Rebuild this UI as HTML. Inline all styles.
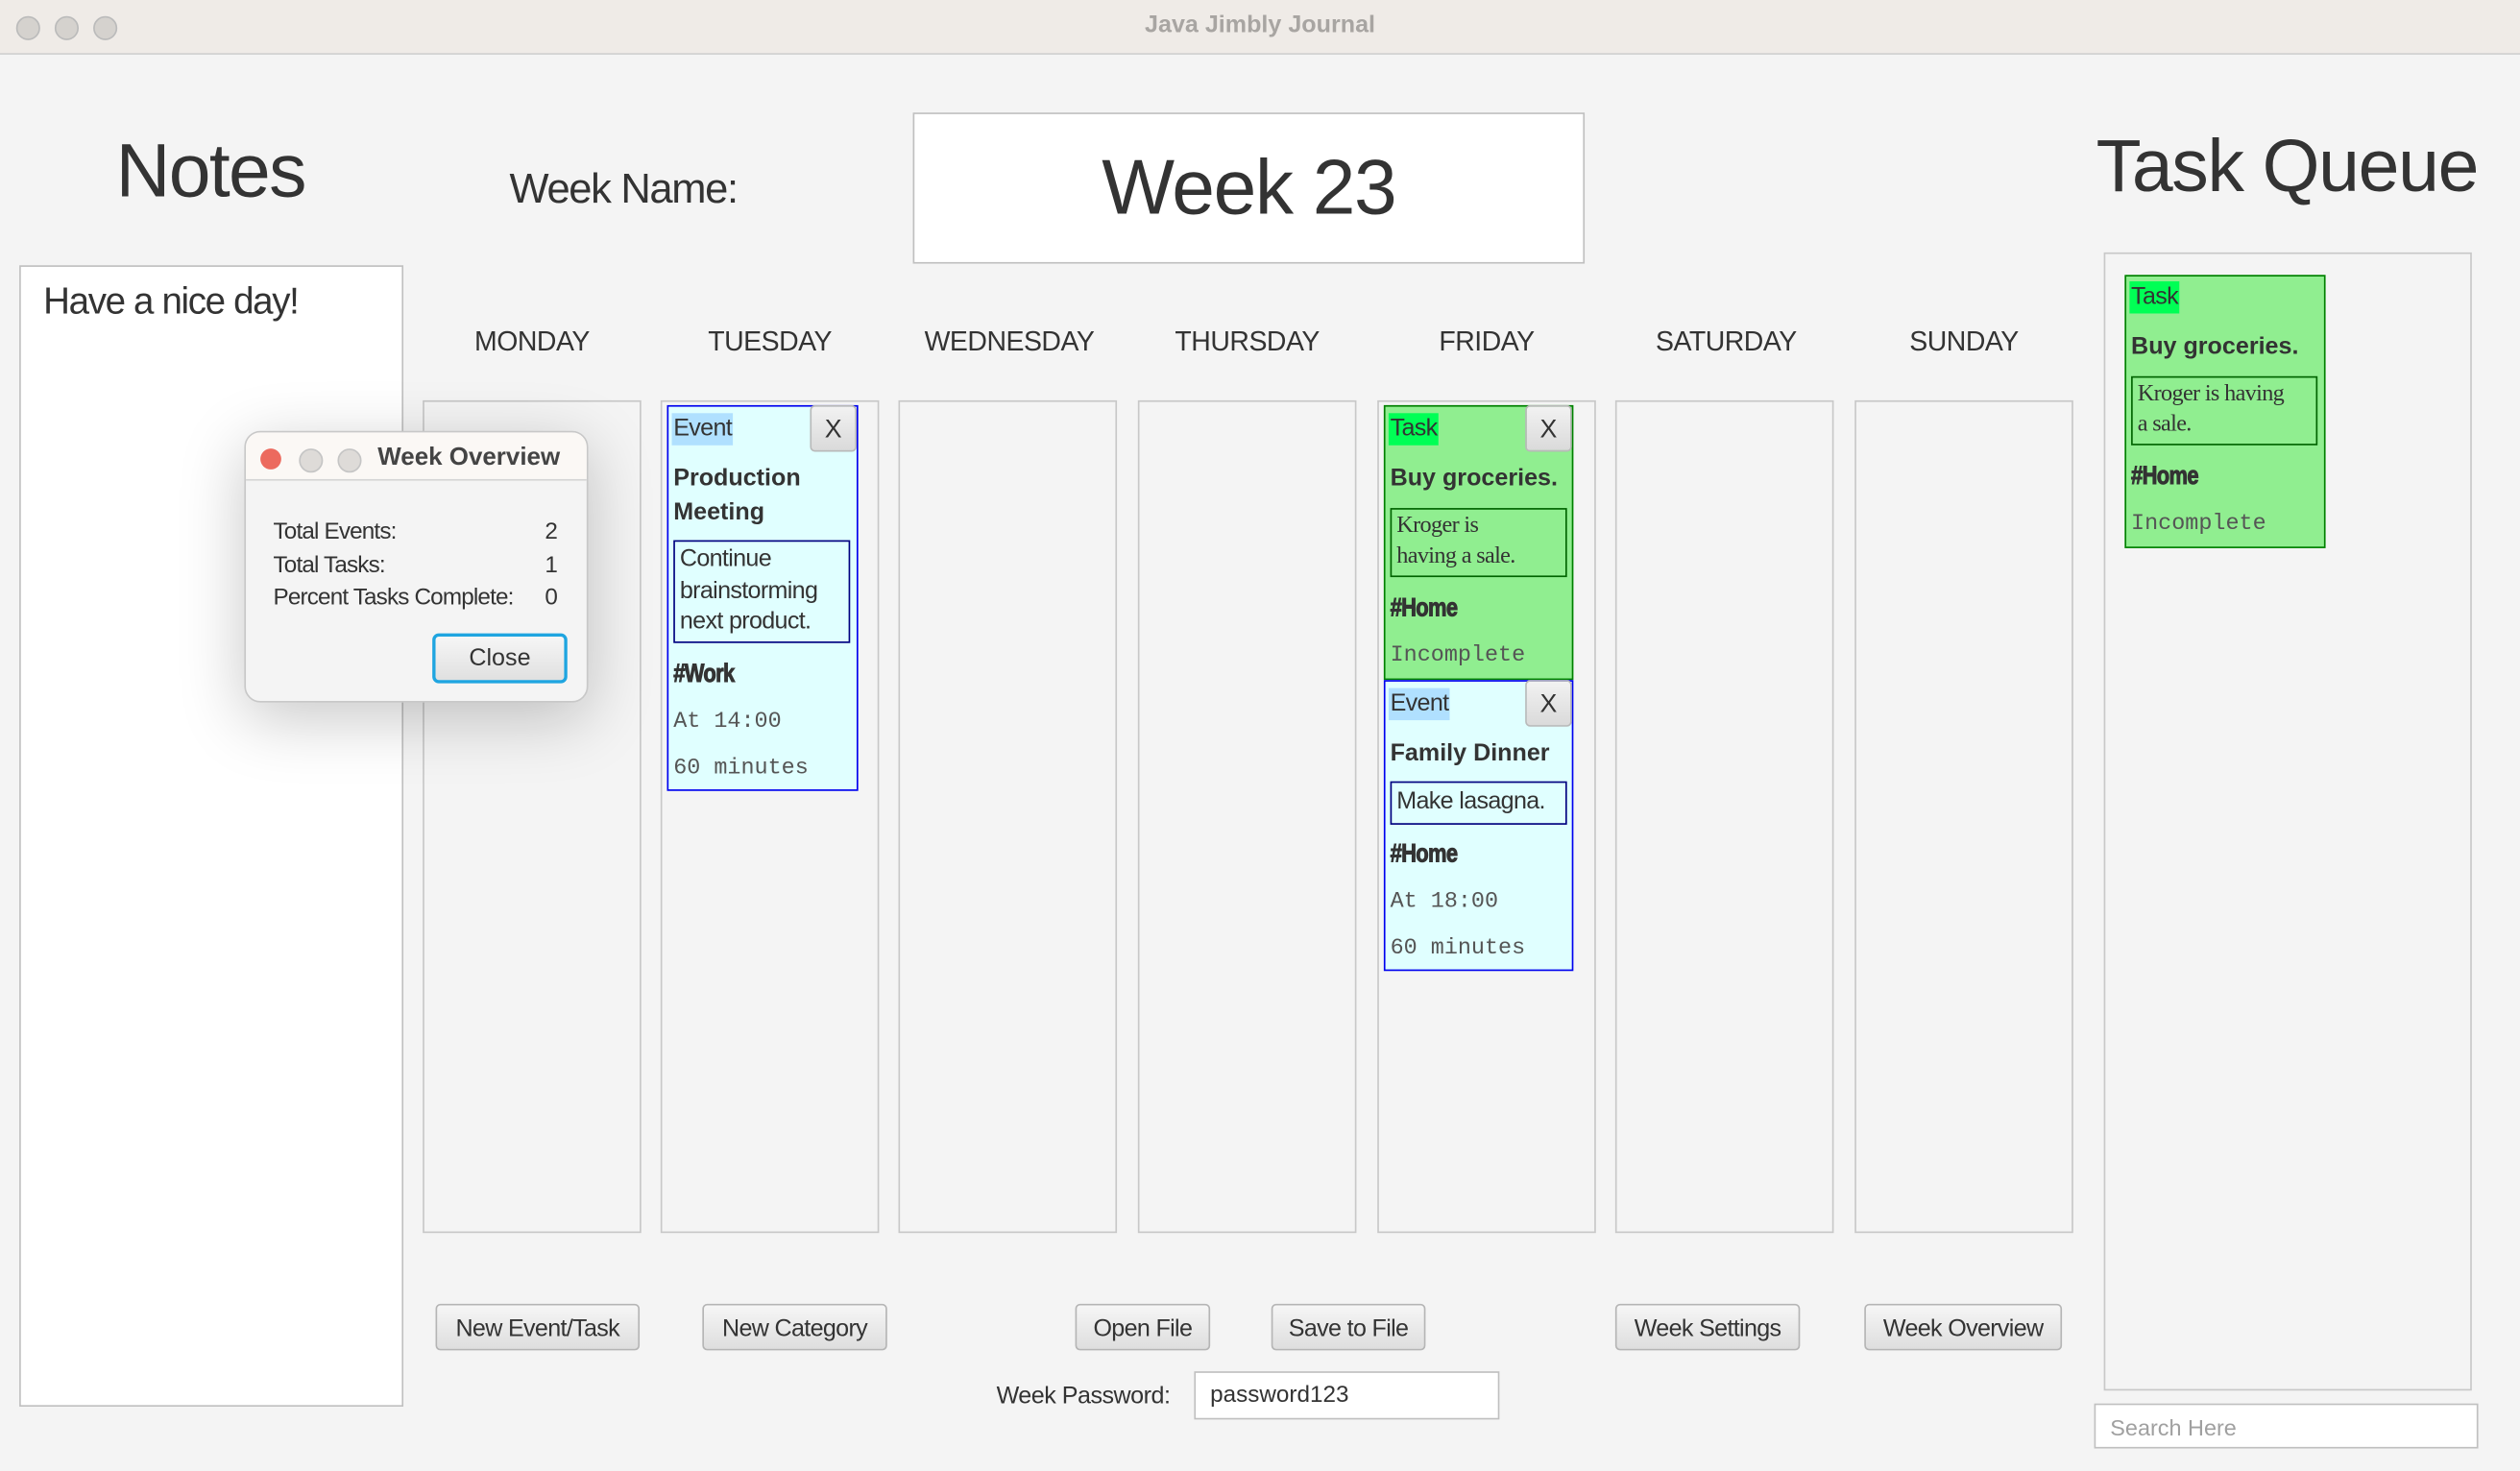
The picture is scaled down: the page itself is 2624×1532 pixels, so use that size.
<!DOCTYPE html>
<html><head><meta charset="utf-8"><style>
html,body{margin:0;padding:0;width:2624px;height:1532px;overflow:hidden;background:#f4f4f4}
#s{position:absolute;left:0;top:0;width:1568px;height:915px;transform:scale(1.6735,1.6743);transform-origin:0 0;font-family:"Liberation Sans",sans-serif;color:#333;background:#f4f4f4}
.a{position:absolute;white-space:nowrap}
.c{text-align:center}
.col{position:absolute;top:249px;width:134px;height:516px;border:1px solid #c8c8c8;background:#f4f4f4}
.day{position:absolute;top:203px;font-size:17px;width:140px;text-align:center;letter-spacing:-0.3px}
.btn{position:absolute;top:811px;height:29px;border:1px solid #b5b5b5;border-radius:3px;background:linear-gradient(#f6f6f6,#dedede);font-size:15px;line-height:29px;text-align:center;letter-spacing:-0.4px;box-sizing:border-box}
.card{position:absolute;box-sizing:border-box;border:1.5px solid #0000ee;background:#e0ffff}
.tag{position:absolute;font-size:15px;padding:0 1px;line-height:20px;letter-spacing:-0.4px}
.x{position:absolute;width:29px;height:29px;border:1px solid #b9b9b9;border-radius:3px;background:linear-gradient(#f2f2f2,#dadada);font-size:16px;line-height:29px;text-align:center;box-sizing:border-box}
.t{position:absolute;font-weight:bold;font-size:15px;line-height:21px}
.d{position:absolute;border:1.5px solid #000080;box-sizing:border-box;font-size:15px;line-height:19.5px;padding:1px 3px;letter-spacing:-0.4px}
.h{position:absolute;font-weight:bold;font-size:16px;letter-spacing:-0.5px;transform:scaleX(0.82);transform-origin:0 0;-webkit-text-stroke:0.6px #333}
.m{position:absolute;font-family:"Liberation Mono",monospace;font-size:14px;color:#555}
</style></head><body><div id="s">
<div class="a" style="left:0;top:0;width:1568px;height:33px;background:#efebe7;border-bottom:1px solid #d0d0d0"></div>
<div class="a" style="left:10px;top:10px;width:13px;height:13px;border-radius:50%;background:#d5d2ce;border:0.5px solid #bbb"></div>
<div class="a" style="left:34px;top:10px;width:13px;height:13px;border-radius:50%;background:#d5d2ce;border:0.5px solid #bbb"></div>
<div class="a" style="left:58px;top:10px;width:13px;height:13px;border-radius:50%;background:#d5d2ce;border:0.5px solid #bbb"></div>
<div class="a c" style="left:0;width:1568px;top:7px;font-size:15px;font-weight:bold;color:#a8a5a2">Java Jimbly Journal</div>

<div class="a c" style="left:30px;width:202px;top:78px;font-size:47px;letter-spacing:-1px">Notes</div>
<div class="a" style="left:317px;top:102px;font-size:26px;letter-spacing:-0.8px">Week Name:</div>
<div class="a c" style="left:568px;top:70px;width:416px;height:92px;background:#fff;border:1px solid #c0c0c0;font-size:48px;line-height:94px;letter-spacing:-0.8px">Week 23</div>
<div class="a c" style="left:1290px;width:266px;top:76px;font-size:46px;letter-spacing:-0.8px">Task Queue</div>

<div class="a" style="left:12px;top:165px;width:237px;height:708px;background:#fff;border:1px solid #c0c0c0"></div>
<div class="a" style="left:27px;top:174px;font-size:23px;letter-spacing:-0.8px">Have a nice day!</div>

<div class="day" style="left:261px">MONDAY</div>
<div class="day" style="left:409px">TUESDAY</div>
<div class="day" style="left:558px">WEDNESDAY</div>
<div class="day" style="left:706px">THURSDAY</div>
<div class="day" style="left:855px">FRIDAY</div>
<div class="day" style="left:1004px">SATURDAY</div>
<div class="day" style="left:1152px">SUNDAY</div>

<div class="col" style="left:263px"></div>
<div class="col" style="left:411px"></div>
<div class="col" style="left:559px"></div>
<div class="col" style="left:708px"></div>
<div class="col" style="left:857px"></div>
<div class="col" style="left:1005px"></div>
<div class="col" style="left:1154px"></div>

<!-- Tuesday event -->
<div class="card" style="left:415px;top:252px;width:119px;height:240px">
<div class="tag" style="left:2px;top:4px;background:#b0e0ff">Event</div>
<div class="x" style="left:88px;top:-1px">X</div>
<div class="t" style="left:3px;top:34px">Production<br>Meeting</div>
<div class="d" style="left:3px;top:83px;width:110px;height:64px">Continue<br>brainstorming<br>next product.</div>
<div class="h" style="left:3px;top:158px">#Work</div>
<div class="m" style="left:3px;top:188px">At 14:00</div>
<div class="m" style="left:3px;top:217px">60 minutes</div>
</div>

<!-- Friday task -->
<div class="card" style="left:861px;top:252px;width:118px;height:171px;background:#90ee90;border-color:#008000">
<div class="tag" style="left:2px;top:4px;background:#00ff55">Task</div>
<div class="x" style="left:87px;top:-1px">X</div>
<div class="t" style="left:3px;top:34px">Buy groceries.</div>
<div class="d" style="left:3px;top:63px;width:110px;height:43px;border-color:#006400;font-family:'Liberation Serif',serif;font-size:14.5px;line-height:19px">Kroger is<br>having a sale.</div>
<div class="h" style="left:3px;top:117px">#Home</div>
<div class="m" style="left:3px;top:147px">Incomplete</div>
</div>

<!-- Friday event -->
<div class="card" style="left:861px;top:423px;width:118px;height:181px">
<div class="tag" style="left:2px;top:4px;background:#b0e0ff">Event</div>
<div class="x" style="left:87px;top:-1px">X</div>
<div class="t" style="left:3px;top:34px">Family Dinner</div>
<div class="d" style="left:3px;top:62px;width:110px;height:27px;line-height:21px">Make lasagna.</div>
<div class="h" style="left:3px;top:99px">#Home</div>
<div class="m" style="left:3px;top:129px">At 18:00</div>
<div class="m" style="left:3px;top:158px">60 minutes</div>
</div>

<!-- Task queue -->
<div class="a" style="left:1309px;top:157px;width:227px;height:706px;border:1px solid #c8c8c8"></div>
<div class="card" style="left:1322px;top:171px;width:125px;height:170px;background:#90ee90;border-color:#008000">
<div class="tag" style="left:2px;top:3px;background:#00ff55">Task</div>
<div class="t" style="left:3px;top:33px">Buy groceries.</div>
<div class="d" style="left:3px;top:62px;width:116px;height:43px;border-color:#006400;font-family:'Liberation Serif',serif;font-size:14.5px;line-height:19px">Kroger is having<br>a sale.</div>
<div class="h" style="left:3px;top:116px">#Home</div>
<div class="m" style="left:3px;top:146px">Incomplete</div>
</div>
<div class="a" style="left:1303px;top:873px;width:239px;height:28px;background:#fff;border:1px solid #c0c0c0;font-size:14px;line-height:28px;color:#a0a0a0;box-sizing:border-box;padding-left:9px">Search Here</div>

<div class="btn" style="left:271px;width:127px">New Event/Task</div>
<div class="btn" style="left:437px;width:115px">New Category</div>
<div class="btn" style="left:669px;width:84px">Open File</div>
<div class="btn" style="left:791px;width:96px">Save to File</div>
<div class="btn" style="left:1005px;width:115px">Week Settings</div>
<div class="btn" style="left:1160px;width:123px">Week Overview</div>
<div class="a" style="left:620px;top:860px;font-size:15px;letter-spacing:-0.3px">Week Password:</div>
<div class="a" style="left:743px;top:853px;width:190px;height:30px;background:#fff;border:1px solid #c0c0c0;box-sizing:border-box;font-size:14.5px;line-height:28px;padding-left:9px">password123</div>

<!-- Dialog -->
<div class="a" style="left:152px;top:268px;width:214px;height:169px;border-radius:10px;background:#f4f4f4;border:1px solid #c8c8c8;box-shadow:0 10px 40px rgba(0,0,0,0.22);overflow:hidden;box-sizing:border-box">
<div class="a" style="left:0;top:0;width:214px;height:29px;background:#fbf8f5;border-bottom:1px solid #d5d5d5"></div>
<div class="a" style="left:9px;top:10px;width:13px;height:13px;border-radius:50%;background:#ec6a5e"></div>
<div class="a" style="left:33px;top:10px;width:13px;height:13px;border-radius:50%;background:#dedbd8;border:0.5px solid #c5c5c5"></div>
<div class="a" style="left:57px;top:10px;width:13px;height:13px;border-radius:50%;background:#dedbd8;border:0.5px solid #c5c5c5"></div>
<div class="a" style="left:82px;top:7px;font-size:15.5px;font-weight:bold;color:#444">Week Overview</div>
<div class="a" style="left:17px;top:52px;font-size:14.5px;line-height:20.5px;letter-spacing:-0.5px">Total Events:<br>Total Tasks:<br>Percent Tasks Complete:</div>
<div class="a" style="left:186px;top:52px;font-size:14.5px;line-height:20.5px">2<br>1<br>0</div>
<div class="a c" style="left:116px;top:125px;width:84px;height:31px;box-sizing:border-box;border:2px solid #1fa5e0;border-radius:4px;background:linear-gradient(#f6f6f6,#e0e0e0);font-size:15px;line-height:27px">Close</div>
</div>
</div></body></html>
